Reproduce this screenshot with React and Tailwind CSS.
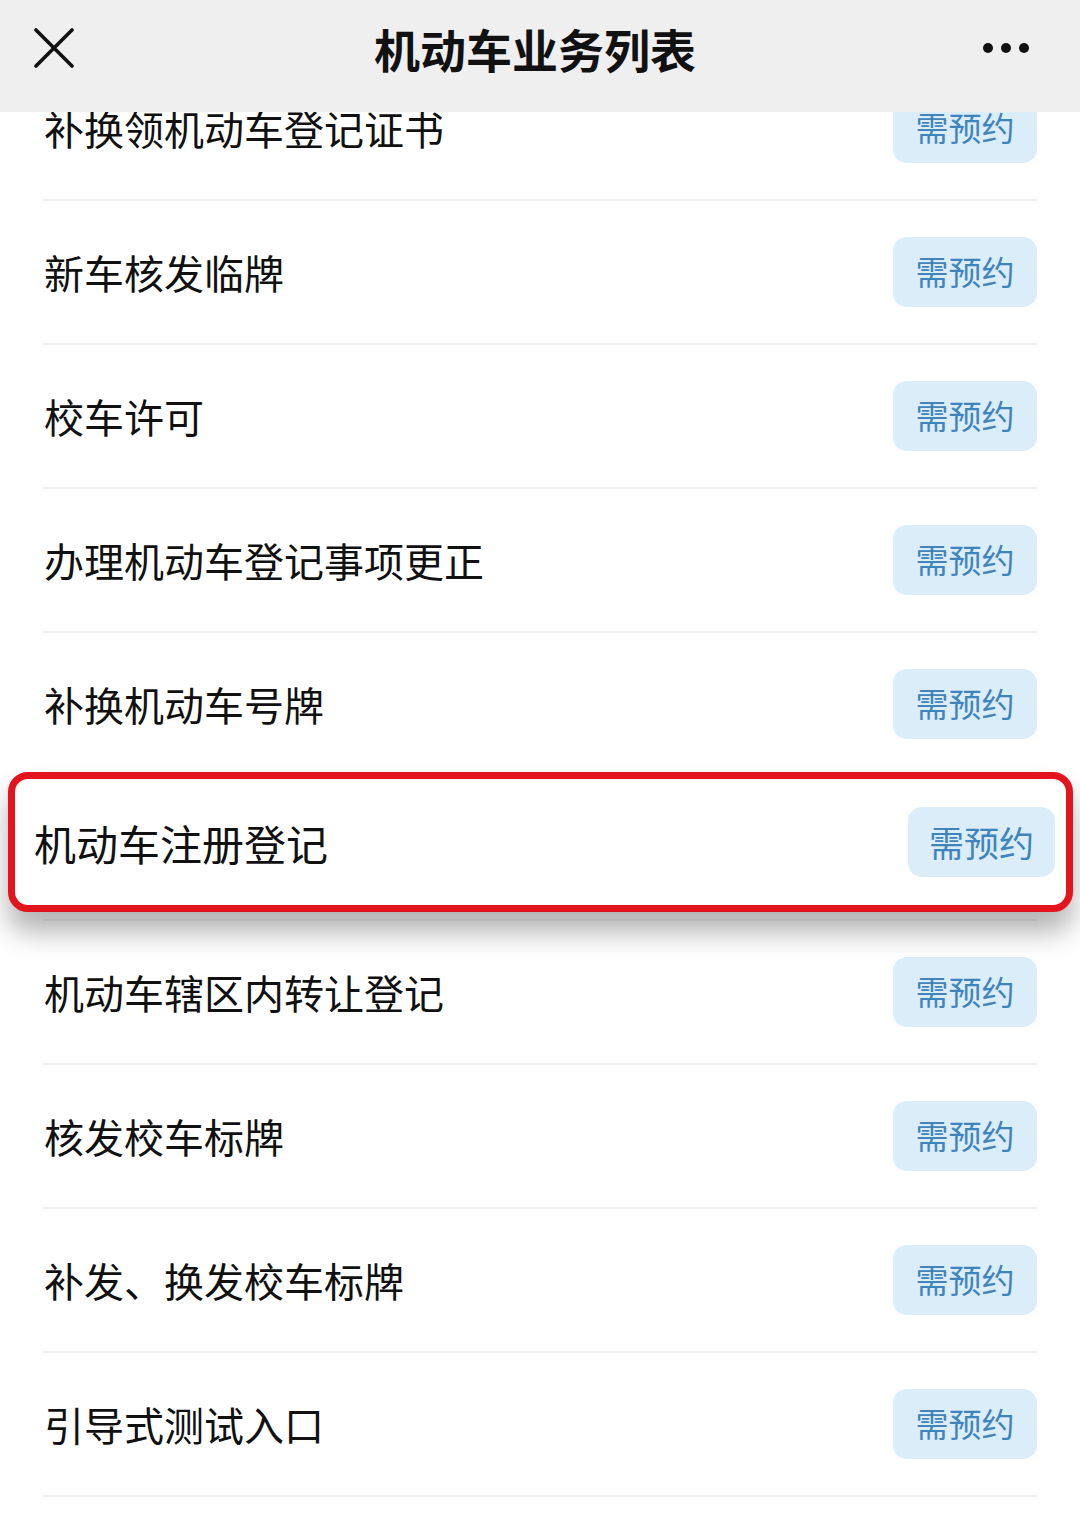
import React from 'react';

const FONT = { fontFamily: '"Noto Sans CJK SC", "Noto Sans", sans-serif' };

const items = [
  '补换领机动车登记证书',
  '新车核发临牌',
  '校车许可',
  '办理机动车登记事项更正',
  '补换机动车号牌',
  '机动车注册登记',
  '机动车辖区内转让登记',
  '核发校车标牌',
  '补发、换发校车标牌',
  '引导式测试入口',
];

const HIGHLIGHT = 5;

function ReserveTag({ big }) {
  return (
    <div
      className={
        big
          ? 'flex h-[70px] w-[147px] items-center justify-center rounded-[14px] bg-[#dcedfa] text-[35px] text-[#3f84bb]'
          : 'flex h-[70px] w-[144px] items-center justify-center rounded-[14px] bg-[#dcedfa] text-[33px] text-[#3f84bb]'
      }
    >
      需预约
    </div>
  );
}

function Row({ label }) {
  return (
    <div className="flex h-[142px] items-center justify-between pl-[44px] pr-[43px]">
      <span className="text-[40px] text-[#111]">{label}</span>
      <ReserveTag />
    </div>
  );
}

function HighlightRow({ label }) {
  return (
    <div className="relative h-[142px]">
      <div className="absolute left-[8px] right-[7px] top-[-5px] z-[5] flex h-[140px] items-center justify-between rounded-[20px] border-[7px] border-[#e3141b] bg-white pl-[19px] pr-[11px] shadow-[0_20px_28px_rgba(0,0,0,0.3)]">
        <span className="text-[42px] text-[#111]">{label}</span>
        <ReserveTag big />
      </div>
    </div>
  );
}

export default function App() {
  return (
    <div className="h-[1530px] w-[1080px] overflow-hidden bg-white" style={FONT}>
      <div className="relative z-10 flex h-[112px] items-center justify-between bg-[#efefef] pb-[16px] pl-[34px] pr-[50px]">
        <svg width="40" height="40" viewBox="0 0 40 40">
          <path d="M2 2 L38 38 M38 2 L2 38" stroke="#111" strokeWidth="3.6" strokeLinecap="round" />
        </svg>
        <h1 className="ml-[14px] text-[46px] font-bold text-[#111]">机动车业务列表</h1>
        <svg width="48" height="14" viewBox="0 0 48 14">
          <circle cx="6" cy="7" r="5" fill="#111" />
          <circle cx="24" cy="7" r="5" fill="#111" />
          <circle cx="42" cy="7" r="5" fill="#111" />
        </svg>
      </div>

      <div className="-mt-[55px]">
        {items.map((label, i) => (
          <div key={i}>
            {i === HIGHLIGHT ? <HighlightRow label={label} /> : <Row label={label} />}
            <div className="mx-[43px] h-[2px] bg-[#efefef]" />
          </div>
        ))}
      </div>
    </div>
  );
}
